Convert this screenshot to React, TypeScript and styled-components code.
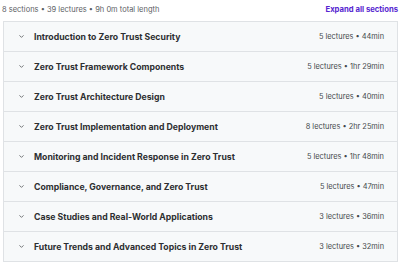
import React from "react";
import styled, { createGlobalStyle } from "styled-components";

const GlobalStyle = createGlobalStyle`
  html, body {
    margin: 0;
    padding: 0;
    background: #ffffff;
  }
  body {
    font-family: Inter, "Noto Sans", sans-serif;
    color: #2d2f31;
  }
`;

const Wrapper = styled.div`
  width: 400px;
  padding: 0 2px 0 3px;
  box-sizing: border-box;
`;

const Summary = styled.div`
  display: flex;
  justify-content: space-between;
  align-items: center;
  height: 18px;
  padding-bottom: 3px;
`;

const Stats = styled.span`
  font-size: 7.5px;
  color: #5c6064;
  margin-left: -1px;
`;

const ExpandAll = styled.button`
  border: none;
  background: none;
  padding: 0;
  font-family: inherit;
  font-size: 7.7px;
  font-weight: 700;
  color: #5624d0;
  cursor: pointer;
`;

const Panel = styled.div`
  border: 1px solid #dfe2e5;
  border-bottom: none;
`;

const Row = styled.div`
  display: flex;
  align-items: center;
  height: 29px;
  background: #f7f9fa;
  border-bottom: 1px solid #dfe2e5;
  padding: 0 13px 0 14px;
`;

const Chevron = styled.svg`
  width: 7px;
  height: 7px;
  flex: none;
  margin-right: 9px;
  color: #3e4143;
`;

const Title = styled.span`
  flex: 1;
  font-size: 8.7px;
  font-weight: 700;
  color: #2d2f31;
  white-space: nowrap;
`;

const Meta = styled.span`
  font-size: 7.4px;
  color: #45494c;
  white-space: nowrap;
`;

const sections = [
  { title: "Introduction to Zero Trust Security", meta: "5 lectures • 44min" },
  { title: "Zero Trust Framework Components", meta: "5 lectures • 1hr 29min" },
  { title: "Zero Trust Architecture Design", meta: "5 lectures • 40min" },
  { title: "Zero Trust Implementation and Deployment", meta: "8 lectures • 2hr 25min" },
  { title: "Monitoring and Incident Response in Zero Trust", meta: "5 lectures • 1hr 48min" },
  { title: "Compliance, Governance, and Zero Trust", meta: "5 lectures • 47min" },
  { title: "Case Studies and Real-World Applications", meta: "3 lectures • 36min" },
  { title: "Future Trends and Advanced Topics in Zero Trust", meta: "3 lectures • 32min" },
];

export default function App() {
  return (
    <>
      <GlobalStyle />
      <Wrapper>
        <Summary>
          <Stats>8 sections • 39 lectures • 9h 0m total length</Stats>
          <ExpandAll>Expand all sections</ExpandAll>
        </Summary>
        <Panel>
          {sections.map((s) => (
            <Row key={s.title}>
              <Chevron viewBox="0 0 24 24" fill="none" stroke="currentColor" strokeWidth="2.4" strokeLinecap="round" strokeLinejoin="round">
                <path d="M6 9l6 6 6-6" />
              </Chevron>
              <Title>{s.title}</Title>
              <Meta>{s.meta}</Meta>
            </Row>
          ))}
        </Panel>
      </Wrapper>
    </>
  );
}
